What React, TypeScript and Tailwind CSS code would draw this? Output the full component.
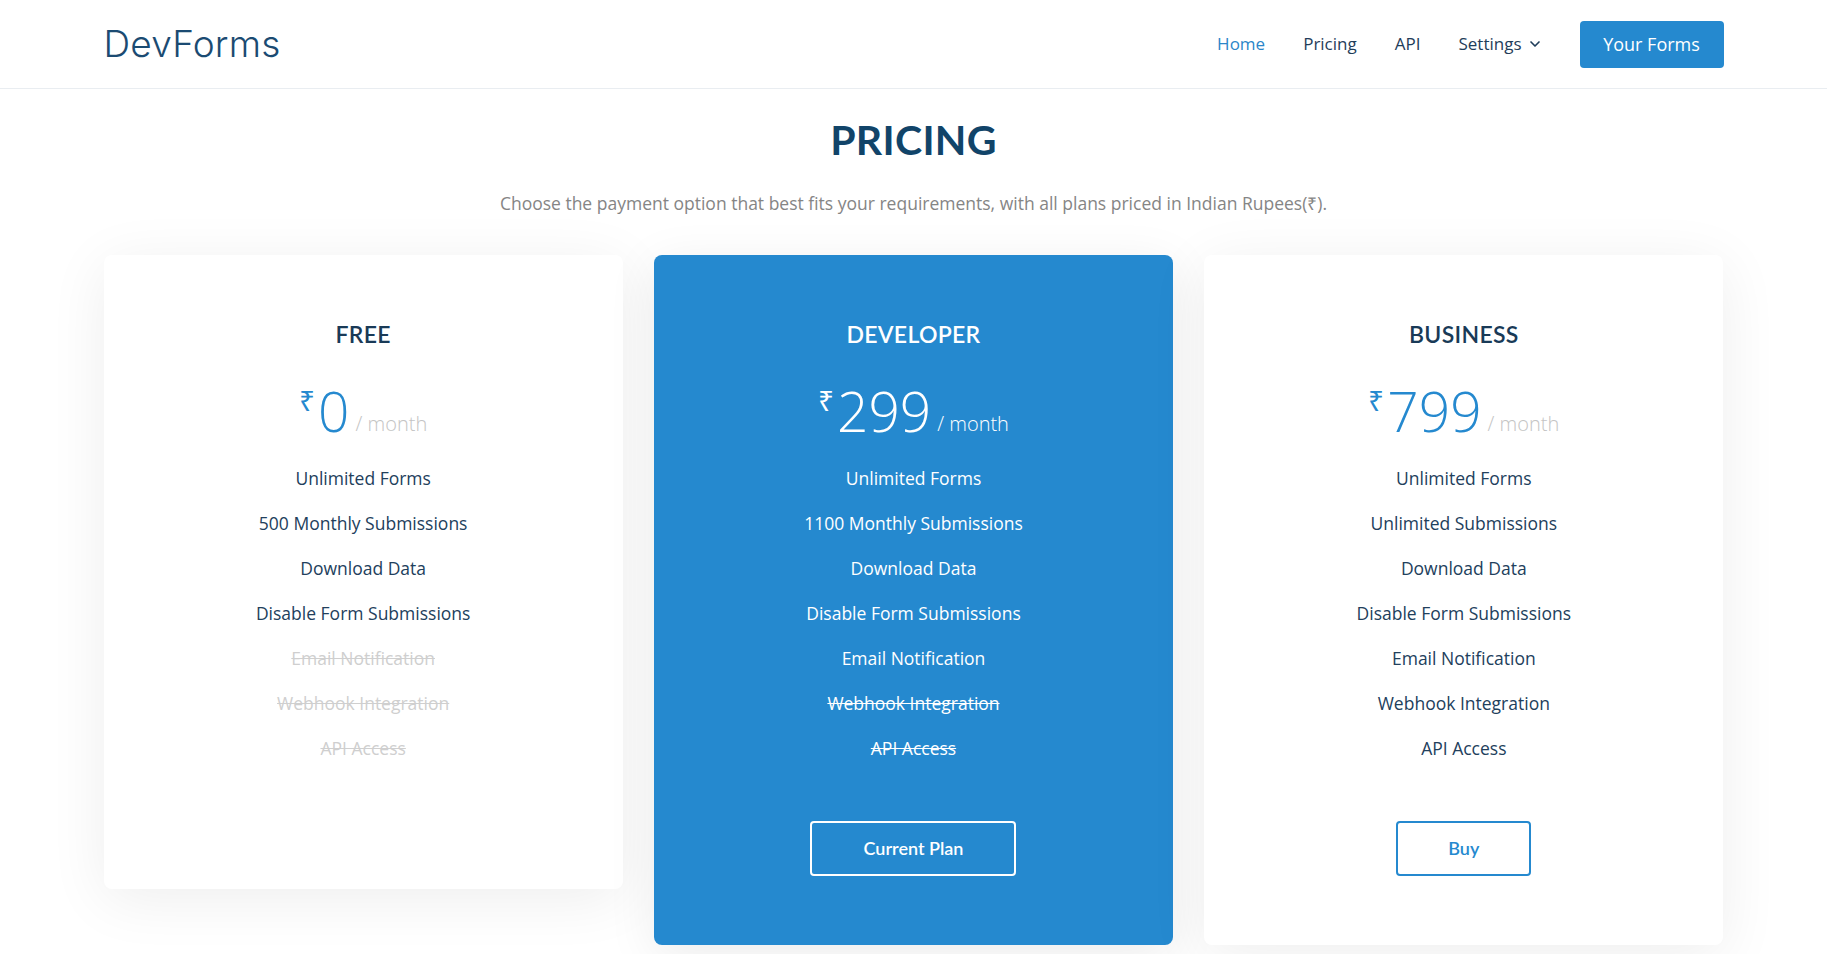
import { ChevronDown } from "lucide-react";

type Feature = { label: string; on: boolean };

type Plan = {
  name: string;
  price: string;
  features: Feature[];
  featured?: boolean;
  action?: string;
};

const plans: Plan[] = [
  {
    name: "FREE",
    price: "0",
    features: [
      { label: "Unlimited Forms", on: true },
      { label: "500 Monthly Submissions", on: true },
      { label: "Download Data", on: true },
      { label: "Disable Form Submissions", on: true },
      { label: "Email Notification", on: false },
      { label: "Webhook Integration", on: false },
      { label: "API Access", on: false },
    ],
  },
  {
    name: "DEVELOPER",
    price: "299",
    featured: true,
    action: "Current Plan",
    features: [
      { label: "Unlimited Forms", on: true },
      { label: "1100 Monthly Submissions", on: true },
      { label: "Download Data", on: true },
      { label: "Disable Form Submissions", on: true },
      { label: "Email Notification", on: true },
      { label: "Webhook Integration", on: false },
      { label: "API Access", on: false },
    ],
  },
  {
    name: "BUSINESS",
    price: "799",
    action: "Buy",
    features: [
      { label: "Unlimited Forms", on: true },
      { label: "Unlimited Submissions", on: true },
      { label: "Download Data", on: true },
      { label: "Disable Form Submissions", on: true },
      { label: "Email Notification", on: true },
      { label: "Webhook Integration", on: true },
      { label: "API Access", on: true },
    ],
  },
];

function PlanCard({ plan }: { plan: Plan }) {
  const blue = plan.featured;
  return (
    <div
      className={
        "flex flex-col items-center rounded-lg pt-[66px] " +
        (blue
          ? "bg-[#2589cf] text-white pb-[69px] shadow-[0_10px_50px_rgba(0,0,0,0.08)]"
          : "bg-white text-[#1d3c58] shadow-[0_10px_60px_rgba(0,0,0,0.07)] " +
            (plan.action ? "pb-[69px]" : "pb-[118px]"))
      }
    >
      {/* plan name */}
      <h3
        className={
          "font-['Lato',sans-serif] text-[23px] font-semibold leading-[26px] tracking-[0.3px] " +
          (blue ? "text-white" : "text-[#193a57]")
        }
      >
        {plan.name}
      </h3>

      {/* price */}
      <div className="mt-[35px] flex items-end font-['Open_Sans',sans-serif]">
        <span
          className={
            "self-start mt-[4px] mr-[3px] text-[28px] leading-none " +
            (blue ? "text-white" : "text-[#2589cf]")
          }
        >
          ₹
        </span>
        <span
          className={
            "text-[55px] font-light leading-[58px] " +
            (blue ? "text-white" : "text-[#2589cf]")
          }
        >
          {plan.price}
        </span>
        <span
          className={
            "ml-[6px] mb-[6px] text-[20px] font-light leading-none " +
            (blue ? "text-white" : "text-[#c4c4c4]")
          }
        >
          / month
        </span>
      </div>

      {/* features */}
      <ul className="mt-[16px] flex flex-col items-center font-['Open_Sans',sans-serif] text-[17.5px]">
        {plan.features.map((f) => (
          <li
            key={f.label}
            className={
              "h-[45px] leading-[45px] " +
              (f.on
                ? blue
                  ? "text-white"
                  : "text-[#22405c]"
                : blue
                ? "text-white line-through"
                : "text-[#cfcfcf] line-through")
            }
          >
            {f.label}
          </li>
        ))}
      </ul>

      {plan.action && (
        <button
          className={
            "mt-[50px] h-[55px] rounded-[4px] border-2 font-['Lato',sans-serif] text-[18px] font-semibold " +
            (blue
              ? "w-[206px] border-white text-white"
              : "w-[135px] border-[#2589cf] text-[#2589cf]")
          }
        >
          {plan.action}
        </button>
      )}
    </div>
  );
}

export default function App() {
  return (
    <div className="min-h-screen bg-white">
      {/* NAVBAR */}
      <nav className="h-[89px] border-b border-[#e9edf1]">
        <div className="mx-auto flex h-full w-[1620px] items-center justify-between">
          <a className="font-['Inter',sans-serif] text-[37px] font-light tracking-[0.2px] text-[#1b4b72]">
            DevForms
          </a>
          <div className="flex items-center font-['Open_Sans',sans-serif] text-[17px]">
            <a className="text-[#2b86c9]">Home</a>
            <a className="ml-[38px] text-[#1f3d5a]">Pricing</a>
            <a className="ml-[38px] text-[#1f3d5a]">API</a>
            <a className="ml-[38px] flex items-center gap-[5px] text-[#1f3d5a]">
              Settings
              <ChevronDown size={16} strokeWidth={2.5} />
            </a>
            <button className="ml-[37px] h-[47px] w-[144px] rounded-[4px] bg-[#2589cf] text-[18px] text-white">
              Your Forms
            </button>
          </div>
        </div>
      </nav>

      {/* HEADER */}
      <div className="mt-[26px] text-center">
        <h1 className="font-['Lato',sans-serif] text-[41px] font-bold leading-[50px] tracking-[0.3px] text-[#114469]">
          PRICING
        </h1>
        <p className="mt-[25px] font-['Open_Sans',sans-serif] text-[17.5px] text-[#858585]">
          Choose the payment option that best fits your requirements, with all plans priced in Indian Rupees(₹).
        </p>
      </div>

      {/* PLANS */}
      <div className="mx-auto mt-[39px] grid w-[1620px] grid-cols-3 items-start gap-[31px]">
        {plans.map((plan) => (
          <PlanCard key={plan.name} plan={plan} />
        ))}
      </div>
    </div>
  );
}
